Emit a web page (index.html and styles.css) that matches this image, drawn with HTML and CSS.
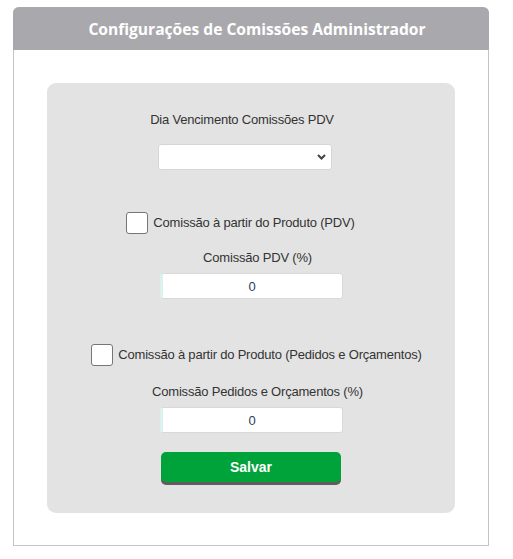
FILE: index.html
```html
<!DOCTYPE html>
<html lang="pt-BR">
<head>
<meta charset="utf-8">
<title>Configurações de Comissões Administrador</title>
<link rel="stylesheet" href="styles.css">
</head>
<body>
<div class="panel">
  <div class="panel-header">Configurações de Comissões Administrador</div>
  <div class="panel-body">
    <form class="card">
      <label class="field-label lbl-dia" for="dia">Dia Vencimento Comissões PDV</label>
      <div class="select-box">
        <select id="dia" class="select"><option></option></select>
        <svg class="chev" width="9" height="6" viewBox="0 0 9 6"><path d="M1 1 L4.5 4.5 L8 1" fill="none" stroke="#444" stroke-width="2"/></svg>
      </div>
      <label class="check-row row-pdv"><input type="checkbox" class="check"><span>Comissão à partir do Produto (PDV)</span></label>
      <label class="field-label lbl-pct" for="pdv">Comissão PDV (%)</label>
      <input id="pdv" class="num" type="text" value="0">
      <label class="check-row row-ped"><input type="checkbox" class="check"><span>Comissão à partir do Produto (Pedidos e Orçamentos)</span></label>
      <label class="field-label lbl-ped" for="ped">Comissão Pedidos e Orçamentos (%)</label>
      <input id="ped" class="num" type="text" value="0">
      <button type="button" class="save">Salvar</button>
    </form>
  </div>
</div>
</body>
</html>
```

FILE: styles.css
```css
html, body {
  margin: 0;
  padding: 0;
  background: #ffffff;
}
body {
  padding: 7px 24px 0 13px;
  font-family: "Liberation Sans", Arial, sans-serif;
  color: #333333;
}
.panel {
  width: 474px;
  border: 1px solid #c4c4c4;
  border-top: none;
  border-radius: 6px 6px 0 0;
}
.panel-header {
  height: 43px;
  margin: 0 -1px;
  background: #a9a9ad;
  border-radius: 6px 6px 0 0;
  color: #ffffff;
  font-family: "Open Sans", sans-serif;
  font-weight: 700;
  font-size: 15.6px;
  display: flex;
  align-items: center;
  justify-content: center;
  padding-left: 12px;
}
.panel-body {
  padding: 33px 33px 32px 33px;
}
.card {
  background: #e3e3e3;
  border-radius: 9px;
  height: 430px;
  box-sizing: border-box;
  margin: 0;
  display: flex;
  flex-direction: column;
  align-items: center;
}
.field-label {
  font-size: 13px;
  letter-spacing: -0.2px;
  line-height: 16px;
  color: #333;
}
.lbl-dia { margin-top: 29px; margin-right: 18px; }
.select-box {
  margin-top: 16px;
  margin-right: 12px;
  width: 174px;
  height: 26px;
  box-sizing: border-box;
  background: #fff;
  border: 1px solid #d6d6d6;
  border-radius: 3px;
  display: flex;
  align-items: center;
}
.select {
  appearance: none;
  -webkit-appearance: none;
  border: none;
  background: transparent;
  flex: 1;
  height: 100%;
  outline: none;
}
.chev { margin-right: 5px; flex: none; }
.check-row {
  display: flex;
  align-items: center;
  gap: 5px;
  font-size: 13px;
  letter-spacing: -0.2px;
  line-height: 16px;
}
.check {
  appearance: none;
  -webkit-appearance: none;
  width: 22px;
  height: 22px;
  margin: 0;
  box-sizing: border-box;
  background: #fff;
  border: 1px solid #767676;
  border-radius: 3px;
}
.row-pdv { margin-top: 42px; margin-right: 21px; }
.lbl-pct { margin-top: 16px; margin-left: 13px; }
.num {
  margin-top: 7px;
  width: 183px;
  height: 26px;
  box-sizing: border-box;
  border: 1px solid #d9d9d9;
  border-left: 3px solid #dcf2ee;
  border-radius: 3px;
  background: #fff;
  text-align: center;
  font-family: "Liberation Sans", Arial, sans-serif;
  font-size: 13px;
  color: #2f3b5a;
  padding: 0;
  outline: none;
}
.row-ped { margin-top: 45px; margin-left: 11px; }
.lbl-ped { margin-top: 18px; margin-left: 13px; }
.save {
  margin-top: 19px;
  width: 180px;
  height: 30px;
  border: none;
  border-radius: 5px;
  background: #00a23a;
  box-shadow: 0 3px 0 #5e5e5e;
  color: #fff;
  font-family: "Liberation Sans", Arial, sans-serif;
  font-weight: 700;
  font-size: 14px;
  padding: 0;
}
```
